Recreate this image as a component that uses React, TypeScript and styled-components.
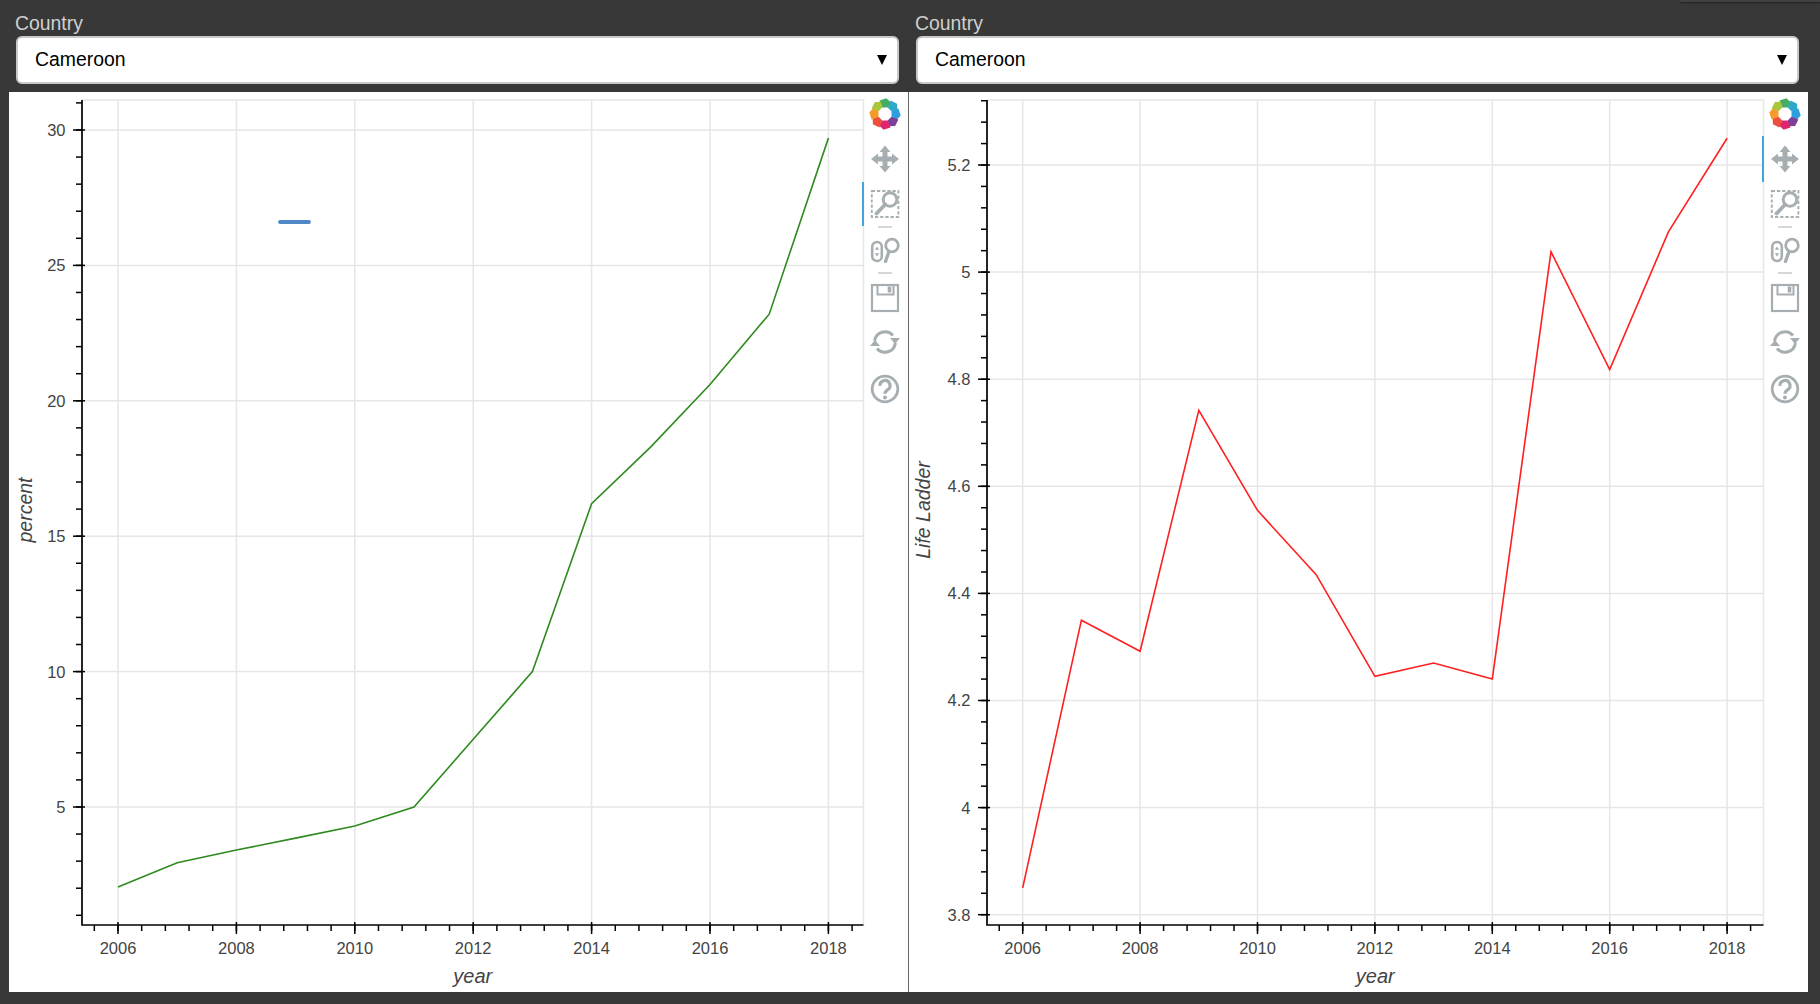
import React from "react";
import styled, { createGlobalStyle } from "styled-components";

const Global = createGlobalStyle`
  html, body { margin: 0; padding: 0; background: #383838; }
  body { font-family: "Liberation Sans", Arial, sans-serif; overflow: hidden; }
`;

const Page = styled.div`
  width: 1820px;
  height: 1004px;
  background: #383838;
  display: flex;
  flex-direction: column;
  position: relative;
`;

const TopEdge = styled.div`
  position: absolute;
  top: 0;
  left: 1680px;
  right: 0;
  height: 2px;
  background: #414141;
  box-shadow: 0 1px 2px rgba(0, 0, 0, 0.45);
`;

const Controls = styled.div`
  height: 92px;
  display: grid;
  grid-template-columns: 900px 900px;
  padding-left: 9px;
  box-sizing: border-box;
`;

const Control = styled.div`
  display: flex;
  flex-direction: column;
  padding: 11px 0 0 6px;
`;

const Label = styled.label`
  color: #d0d0d0;
  font-size: 19.4px;
  line-height: 25px;
  height: 25px;
`;

const Select = styled.div`
  box-sizing: border-box;
  margin-left: 1px;
  width: 883px;
  height: 48px;
  background: #fff;
  border: 2px solid #c8c8c8;
  border-radius: 6px;
  display: flex;
  align-items: center;
  justify-content: space-between;
  padding: 0 10px 2px 17px;
  color: #000;
  font-size: 19.4px;
`;

const Caret = styled.span`
  width: 0;
  height: 0;
  margin-top: 2px;
  border-left: 5.5px solid transparent;
  border-right: 5.5px solid transparent;
  border-top: 10px solid #000;
`;

const Plots = styled.div`
  display: flex;
  padding-left: 9px;
  height: 900px;
`;

const Panel = styled.div<{ $divider?: boolean }>`
  box-sizing: border-box;
  width: ${(p) => (p.$divider ? 900 : 899)}px;
  height: 900px;
  background: #fff;
  display: flex;
  border-right: ${(p) => (p.$divider ? "1px solid #666" : "none")};
`;

const ChartSvg = styled.svg`
  width: 853px;
  height: 900px;
  flex: none;
  overflow: visible;
  font-family: "Liberation Sans", Arial, sans-serif;
`;

const Toolbar = styled.div`
  width: 46px;
  flex: none;
  display: flex;
  flex-direction: column;
  position: relative;
`;

const Tool = styled.div<{ $h: number; $active?: boolean }>`
  box-sizing: border-box;
  height: ${(p) => p.$h}px;
  display: flex;
  align-items: center;
  justify-content: center;
  border-left: 2px solid ${(p) => (p.$active ? "#3fa6dd" : "transparent")};
  padding-right: 2px;
`;

const ToolRule = styled.div`
  width: 14px;
  height: 2px;
  margin: 0 0 0 16px;
  background: #d4d6d8;
  flex: none;
`;

const ICON = "#a7aeb2";

const BokehLogo = () => {
  const colors = ["#45ad62", "#2fa9c9", "#2e9fdc", "#7d3f98", "#e0246f", "#ec4f3c", "#f59b2b", "#a9c73b"];
  return (
    <svg width="32" height="32" viewBox="-16 -16 32 32">
      {colors.map((c, i) => (
        <path key={c} d="M-2.68 -6.47 L-5.55 -13.4 L1.38 -15.74 L5.9 -11.58 L2.68 -6.47 Z" fill={c} transform={`rotate(${i * 45})`} />
      ))}
    </svg>
  );
};

const PanIcon = () => (
  <svg width="30" height="28" viewBox="0 0 30 28">
    <path d="M15 0.5 L20.5 7 H17.5 V11.5 H22 V8.5 L29 14 L22 19.5 V16.5 H17.5 V21 H20.5 L15 27.5 L9.5 21 H12.5 V16.5 H8 V19.5 L1 14 L8 8.5 V11.5 H12.5 V7 H9.5 Z" fill={ICON} />
  </svg>
);

const BoxZoomIcon = () => (
  <svg width="30" height="30" viewBox="0 0 30 30">
    <rect x="1.8" y="2" width="26.6" height="26" fill="none" stroke={ICON} strokeWidth="1.9" strokeDasharray="3.2 2" />
    <circle cx="20" cy="10.5" r="6.8" fill="#fff" stroke={ICON} strokeWidth="3" />
    <path d="M15.2 15.5 L6.5 24.5" stroke={ICON} strokeWidth="3.8" strokeLinecap="round" />
  </svg>
);

const WheelZoomIcon = () => (
  <svg width="30" height="26" viewBox="0 0 30 26">
    <rect x="2.2" y="5" width="9.6" height="19" rx="4.8" fill="none" stroke={ICON} strokeWidth="2.6" />
    <path d="M7 9.5 L9.2 12.8 H4.8 Z M7 19.5 L9.2 16.2 H4.8 Z" fill={ICON} />
    <circle cx="22" cy="8.5" r="6.3" fill="none" stroke={ICON} strokeWidth="2.8" />
    <path d="M19 14.5 L15.5 24.5" stroke={ICON} strokeWidth="3.4" strokeLinecap="round" />
  </svg>
);

const SaveIcon = () => (
  <svg width="30" height="30" viewBox="0 0 30 30">
    <rect x="2" y="2" width="26" height="26" fill="none" stroke={ICON} strokeWidth="2.2" />
    <path d="M7.5 2 V11.5 H23.5 V2" fill="none" stroke={ICON} strokeWidth="2" />
    <rect x="17.7" y="3.5" width="3.6" height="6" fill={ICON} />
  </svg>
);

const ResetIcon = () => (
  <svg width="30" height="26" viewBox="0 0 30 26">
    <path d="M4.6 12 A10.5 10.5 0 0 1 23 6.5" fill="none" stroke={ICON} strokeWidth="3" />
    <path d="M25.4 14 A10.5 10.5 0 0 1 7 19.5" fill="none" stroke={ICON} strokeWidth="3" />
    <path d="M20 9 H30 L25 15 Z M0 17 H10 L5 11 Z" fill={ICON} />
  </svg>
);

const HelpIcon = () => (
  <svg width="30" height="30" viewBox="0 0 30 30">
    <circle cx="15" cy="15" r="12.8" fill="none" stroke={ICON} strokeWidth="2.8" />
    <path d="M10 11.8 A5 5 0 1 1 17.6 15.8 C16 16.8 15 17.6 15 19.8" fill="none" stroke={ICON} strokeWidth="3.2" />
    <circle cx="15" cy="23.4" r="2" fill={ICON} />
  </svg>
);

type ToolbarProps = { active: "pan" | "box" };

const PlotToolbar = ({ active }: ToolbarProps) => (
  <Toolbar>
    <Tool $h={44}><BokehLogo /></Tool>
    <Tool $h={46} $active={active === "pan"}><PanIcon /></Tool>
    <Tool $h={44} $active={active === "box"}><BoxZoomIcon /></Tool>
    <ToolRule />
    <Tool $h={44}><WheelZoomIcon /></Tool>
    <ToolRule />
    <Tool $h={48}><SaveIcon /></Tool>
    <Tool $h={39}><ResetIcon /></Tool>
    <Tool $h={55}><HelpIcon /></Tool>
  </Toolbar>
);

type ChartProps = {
  originX: number;
  axisX: number;
  frameRight: number;
  xAt2006: number;
  yearStep: number;
  yTicks: { label: string; y: number }[];
  minorStart: number;
  minorStep: number;
  data: number[];
  toY: (v: number) => number;
  color: string;
  yTitle: string;
  yTitleX: number;
  mark?: boolean;
};

const PLOT_TOP = 100;
const PLOT_BOTTOM = 925;
const GRID = "#e6e6e6";
const TEXT = "#444";

const Chart = ({ originX, axisX, frameRight, xAt2006, yearStep, yTicks, minorStart, minorStep, data, toY, color, yTitle, yTitleX, mark }: ChartProps) => {
  const years = [2006, 2008, 2010, 2012, 2014, 2016, 2018];
  const xOf = (year: number) => xAt2006 + (year - 2006) * yearStep;
  const xMinor: number[] = [];
  for (let x = xAt2006 - yearStep * 0.4; x < frameRight; x += yearStep * 0.4) xMinor.push(x);
  const yMinor: number[] = [];
  for (let y = minorStart; y >= PLOT_TOP; y -= minorStep) yMinor.push(y);
  const points = data.map((v, i) => `${xOf(2006 + i)},${toY(v)}`).join(" ");
  const centerX = (axisX + frameRight) / 2;
  return (
    <ChartSvg viewBox={`${originX} 92 853 900`}>
      <path d={`M${axisX} ${PLOT_TOP} H${frameRight} V${PLOT_BOTTOM}`} fill="none" stroke={GRID} strokeWidth="1.5" />
      {years.map((yr) => (
        <line key={yr} x1={xOf(yr)} x2={xOf(yr)} y1={PLOT_TOP} y2={PLOT_BOTTOM} stroke={GRID} strokeWidth="1.5" />
      ))}
      {yTicks.map((t) => (
        <line key={t.label} x1={axisX} x2={frameRight} y1={t.y} y2={t.y} stroke={GRID} strokeWidth="1.5" />
      ))}
      <polyline points={points} fill="none" stroke={color} strokeWidth="1.6" />
      {mark && <line x1="280" x2="309" y1="222" y2="222" stroke="#5088c5" strokeWidth="3.8" strokeLinecap="round" />}
      <path d={`M${axisX} ${PLOT_TOP} V${PLOT_BOTTOM} H${frameRight}`} fill="none" stroke="#000" strokeWidth="1.7" />
      {yMinor.map((y) => (
        <line key={y} x1={axisX - 6} x2={axisX} y1={y} y2={y} stroke="#000" strokeWidth="1.5" />
      ))}
      {xMinor.map((x) => (
        <line key={x} x1={x} x2={x} y1={PLOT_BOTTOM} y2={PLOT_BOTTOM + 6} stroke="#000" strokeWidth="1.5" />
      ))}
      {yTicks.map((t) => (
        <g key={t.label}>
          <line x1={axisX - 9} x2={axisX + 3} y1={t.y} y2={t.y} stroke="#000" strokeWidth="1.5" />
          <text x={axisX - 16.5} y={t.y + 5.9} textAnchor="end" fontSize="16.5" fill={TEXT}>{t.label}</text>
        </g>
      ))}
      {years.map((yr) => (
        <g key={yr}>
          <line x1={xOf(yr)} x2={xOf(yr)} y1={PLOT_BOTTOM - 3} y2={PLOT_BOTTOM + 9} stroke="#000" strokeWidth="1.5" />
          <text x={xOf(yr)} y={954} textAnchor="middle" fontSize="16.5" fill={TEXT}>{yr}</text>
        </g>
      ))}
      <text x={centerX} y={983} textAnchor="middle" fontSize="20" fontStyle="italic" fill={TEXT}>year</text>
      <text transform={`translate(${yTitleX} 510) rotate(-90)`} textAnchor="middle" fontSize="19.5" fontStyle="italic" fill={TEXT}>{yTitle}</text>
    </ChartSvg>
  );
};

const percent = [2.05, 2.94, 3.41, 3.85, 4.3, 5.0, 7.5, 10.0, 16.2, 18.3, 20.6, 23.2, 29.7];
const ladder = [3.85, 4.35, 4.292, 4.742, 4.555, 4.435, 4.245, 4.27, 4.24, 5.038, 4.818, 5.075, 5.25];

const leftY = (v: number) => 807 - (v - 5) * 27.08;
const rightY = (v: number) => 914.7 - (v - 3.8) * 535.5;

const leftTicks = [30, 25, 20, 15, 10, 5].map((v) => ({ label: String(v), y: leftY(v) }));
const rightTicks = ["5.2", "5", "4.8", "4.6", "4.4", "4.2", "4", "3.8"].map((s) => ({ label: s, y: rightY(Number(s)) }));

export default function App() {
  return (
    <Page>
      <Global />
      <TopEdge />
      <Controls>
        <Control>
          <Label>Country</Label>
          <Select>Cameroon<Caret /></Select>
        </Control>
        <Control>
          <Label>Country</Label>
          <Select>Cameroon<Caret /></Select>
        </Control>
      </Controls>
      <Plots>
        <Panel $divider>
          <Chart
            originX={9}
            axisX={82}
            frameRight={863.5}
            xAt2006={118}
            yearStep={59.2}
            yTicks={leftTicks}
            minorStart={915.3}
            minorStep={27.08}
            data={percent}
            toY={leftY}
            color="#2f8a1f"
            yTitle="percent"
            yTitleX={32}
            mark
          />
          <PlotToolbar active="box" />
        </Panel>
        <Panel>
          <Chart
            originX={909}
            axisX={987}
            frameRight={1763.5}
            xAt2006={1022.7}
            yearStep={58.7}
            yTicks={rightTicks}
            minorStart={914.7}
            minorStep={21.42}
            data={ladder}
            toY={rightY}
            color="#ff1f1f"
            yTitle="Life Ladder"
            yTitleX={930}
          />
          <PlotToolbar active="pan" />
        </Panel>
      </Plots>
    </Page>
  );
}
